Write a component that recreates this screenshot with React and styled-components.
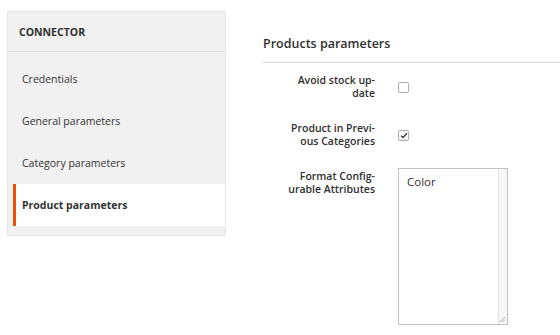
import styled, { createGlobalStyle } from "styled-components"

const GlobalStyle = createGlobalStyle`
  body {
    margin: 0;
    background: #ffffff;
    font-family: "Open Sans", "Liberation Sans", sans-serif;
    color: #333333;
  }
`

const Page = styled.div`
  display: flex;
  align-items: flex-start;
  gap: 37px;
  padding: 11px 0 0 7px;
`

const Sidebar = styled.nav`
  width: 219px;
  flex-shrink: 0;
  background: #f1f1f1;
  border: 1px solid #e6e6e6;
  box-sizing: border-box;
  padding-bottom: 9px;
`

const SidebarTitle = styled.div`
  height: 39px;
  display: flex;
  align-items: center;
  padding-left: 11px;
  border-bottom: 1px solid #dedede;
  font-size: 10.5px;
  font-weight: 700;
  text-transform: uppercase;
  color: #303030;
`

const NavList = styled.ul`
  list-style: none;
  margin: 0;
  padding: 6px 0 0;
`

const NavItem = styled.li`
  height: 42px;
  display: flex;
  align-items: center;
  margin-left: 5px;
  padding-left: 6px;
  border-left: 3px solid ${(p) => (p.$active ? "#eb5202" : "transparent")};
  background: ${(p) => (p.$active ? "#ffffff" : "transparent")};
  font-size: 10.5px;
  font-weight: ${(p) => (p.$active ? 700 : 400)};
  color: #333333;
`

const Main = styled.section`
  flex: 1;
  padding-top: 24px;
`

const Heading = styled.h2`
  margin: 0;
  padding-bottom: 10px;
  border-bottom: 1px solid #d6d6d6;
  font-size: 12.5px;
  font-weight: 600;
  color: #303030;
`

const Form = styled.div`
  display: flex;
  flex-direction: column;
  gap: 22px;
  padding-top: 11px;
`

const Row = styled.div`
  display: grid;
  grid-template-columns: 112px auto;
  column-gap: 23px;
  align-items: ${(p) => (p.$top ? "start" : "center")};
`

const Label = styled.label`
  display: block;
  text-align: right;
  font-size: 10.5px;
  line-height: 13px;
  font-weight: 600;
  color: #303030;
`

const Box = styled.span`
  width: 11px;
  height: 11px;
  box-sizing: border-box;
  border: 1px solid #adadad;
  border-radius: 2px;
  background: #ffffff;
  display: flex;
  align-items: center;
  justify-content: center;
`

const Field = styled.div`
  position: relative;
  width: 110px;
  height: 157px;
  margin-top: -2px;
  box-sizing: border-box;
  border: 1px solid #c2c2c2;
  display: flex;
`

const FieldText = styled.div`
  flex: 1;
  padding: 5px 8px;
  font-size: 11.5px;
  color: #333333;
`

const ScrollTrack = styled.div`
  width: 8px;
  background: #f7f7f7;
  border-left: 1px solid #e3e3e3;
`

const Grip = styled.svg`
  position: absolute;
  right: 1px;
  bottom: 1px;
`

const Checkbox = ({ checked }) => (
  <Box>
    {checked && (
      <svg width="8" height="7" viewBox="0 0 8 7">
        <path d="M1 3.6 L3 5.5 L7 1.2" fill="none" stroke="#333" strokeWidth="1.3" />
      </svg>
    )}
  </Box>
)

const items = ["Credentials", "General parameters", "Category parameters", "Product parameters"]

export default function App() {
  return (
    <>
      <GlobalStyle />
      <Page>
        <Sidebar>
          <SidebarTitle>Connector</SidebarTitle>
          <NavList>
            {items.map((name) => (
              <NavItem key={name} $active={name === "Product parameters"}>
                {name}
              </NavItem>
            ))}
          </NavList>
        </Sidebar>
        <Main>
          <Heading>Products parameters</Heading>
          <Form>
            <Row>
              <Label>Avoid stock up-<br />date</Label>
              <Checkbox />
            </Row>
            <Row>
              <Label>Product in Previ-<br />ous Categories</Label>
              <Checkbox checked />
            </Row>
            <Row $top>
              <Label>Format Config-<br />urable Attributes</Label>
              <Field>
                <FieldText>Color</FieldText>
                <ScrollTrack />
                <Grip width="8" height="8" viewBox="0 0 8 8">
                  <path d="M7 2 L2 7 M7 4.5 L4.5 7" stroke="#999" strokeWidth="0.8" />
                </Grip>
              </Field>
            </Row>
          </Form>
        </Main>
      </Page>
    </>
  )
}
